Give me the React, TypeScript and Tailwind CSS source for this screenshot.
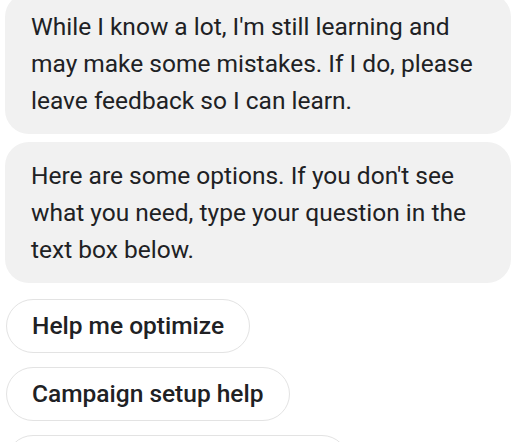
export default function App() {
  return (
    <div className="w-[530px] h-[442px] overflow-hidden bg-white font-['Roboto',sans-serif] text-[#202124]">
      <div className="flex flex-col gap-2 pl-[5px] pr-[19px] mt-[-7px]">
        <div className="rounded-[24px] bg-[#f1f1f1] px-[26px] py-[15px] text-[24.5px] leading-[37px]">
          While I know a lot, I'm still learning and may make some mistakes. If I do, please leave
          feedback so I can learn.
        </div>
        <div className="rounded-[24px] bg-[#f1f1f1] px-[26px] py-[15px] text-[24.5px] leading-[37px]">
          Here are some options. If you don't see what you need, type your question in the text box
          below.
        </div>
      </div>
      <div className="flex flex-col items-start gap-[14px] pl-[6px] mt-4">
        <button className="h-[54px] rounded-full border-[1.5px] border-[#e3e3e3] px-[25px] text-[24.5px] font-medium text-[#202124]">
          Help me optimize
        </button>
        <button className="h-[54px] rounded-full border-[1.5px] border-[#e3e3e3] px-[25px] text-[24.5px] font-medium text-[#202124]">
          Campaign setup help
        </button>
        <button className="h-[54px] rounded-full border-[1.5px] border-[#e3e3e3] px-[25px] text-[24.5px] font-medium text-[#202124]">
          Account performance help
        </button>
      </div>
    </div>
  );
}
